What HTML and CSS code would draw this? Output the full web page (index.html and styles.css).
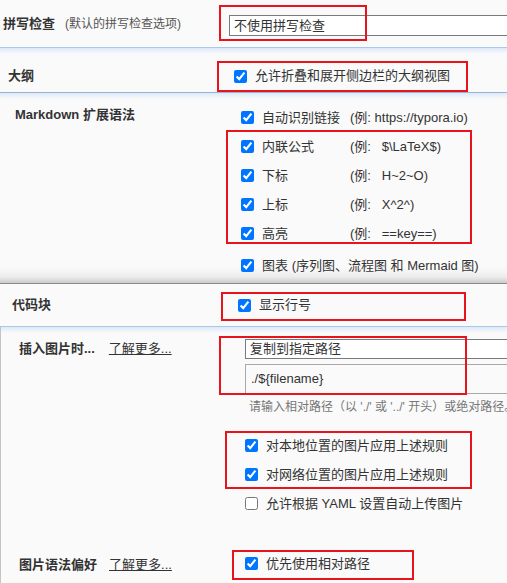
FILE: index.html
```html
<!DOCTYPE html>
<html lang="zh-CN">
<head>
<meta charset="utf-8">
<link rel="stylesheet" href="styles.css">
</head>
<body>
<div class="page">
  <section class="s1">
    <div class="left l1"><span class="h">拼写检查</span><span class="sub">(默认的拼写检查选项)</span></div>
    <div class="selectbox sb1">不使用拼写检查</div>
  </section>
  <div class="ln ln-blue"></div>
  <section class="s2 fade-blue">
    <div class="left l2"><span class="h">大纲</span></div>
    <label class="cb"><input type="checkbox" checked><span>允许折叠和展开侧边栏的大纲视图</span></label>
  </section>
  <div class="ln ln-steel"></div>
  <section class="s3 fade-blue-shadow">
    <div class="left l3"><span class="h">Markdown 扩展语法</span></div>
    <div class="opts">
      <label class="cb row"><input type="checkbox" checked><span class="k">自动识别链接</span><span class="ex">(例: https://typora.io)</span></label>
      <label class="cb row"><input type="checkbox" checked><span class="k">内联公式</span><span class="ex">(例:&nbsp;&nbsp; $\LaTeX$)</span></label>
      <label class="cb row"><input type="checkbox" checked><span class="k">下标</span><span class="ex">(例:&nbsp;&nbsp; H~2~O)</span></label>
      <label class="cb row"><input type="checkbox" checked><span class="k">上标</span><span class="ex">(例:&nbsp;&nbsp; X^2^)</span></label>
      <label class="cb row"><input type="checkbox" checked><span class="k">高亮</span><span class="ex">(例:&nbsp;&nbsp; ==key==)</span></label>
      <label class="cb row last"><input type="checkbox" checked><span>图表 <span class="small">(序列图、流程图 和 Mermaid 图)</span></span></label>
    </div>
  </section>
  <div class="ln ln-dark"></div>
  <section class="s4">
    <div class="left l4"><span class="h">代码块</span></div>
    <label class="cb"><input type="checkbox" checked><span>显示行号</span></label>
  </section>
  <div class="ln ln-blue"></div>
  <section class="s5 fade-blue">
    <div class="grid5">
      <div class="left l5"><span class="h">插入图片时...</span><a class="more">了解更多...</a></div>
      <div class="col5">
        <div class="selectbox sb2">复制到指定路径</div>
        <div class="inputbox">./${filename}</div>
        <div class="hint">请输入相对路径（以 './' 或 '../' 开头）或绝对路径。</div>
        <div class="opts5">
          <label class="cb row"><input type="checkbox" checked><span>对本地位置的图片应用上述规则</span></label>
          <label class="cb row"><input type="checkbox" checked><span>对网络位置的图片应用上述规则</span></label>
          <label class="cb row"><input type="checkbox"><span>允许根据 YAML 设置自动上传图片</span></label>
        </div>
      </div>
      <div class="left l5 pref"><span class="h">图片语法偏好</span><a class="more">了解更多...</a></div>
      <div class="col5 pref">
        <label class="cb row"><input type="checkbox" checked><span>优先使用相对路径</span></label>
      </div>
    </div>
  </section>

  <div class="mark m1"></div>
  <div class="mark m2"></div>
  <div class="mark m3"></div>
  <div class="mark m4"></div>
  <div class="mark m5"></div>
  <div class="mark m6"></div>
  <div class="mark m7"></div>
</div>
</body>
</html>
```

FILE: styles.css
```css
html, body {
  margin: 0;
  padding: 0;
  background: #fafafa;
  overflow: hidden;
}
body {
  width: 507px;
  height: 583px;
  font-family: "Liberation Sans", "Noto Sans CJK SC", sans-serif;
  font-size: 13px;
  color: #333;
}
.page {
  position: relative;
  width: 507px;
  height: 583px;
  overflow: hidden;
}
section {
  box-sizing: border-box;
}
.h {
  font-weight: bold;
  color: #333;
  font-size: 13px;
  line-height: 16px;
}
.sub {
  font-size: 12px;
  color: #555;
  margin-left: 10px;
}
.left {
  box-sizing: border-box;
  flex: none;
  line-height: 16px;
}

/* section 1 */
.s1 {
  height: 47px;
  display: flex;
  align-items: center;
  padding-top: 1px;
}
.l1 { width: 229px; padding-left: 3px; }
.selectbox {
  box-sizing: border-box;
  background: #fff;
  border: 1px solid #7a7a7a;
  font-size: 13px;
  line-height: 18px;
  padding-left: 4px;
  width: 320px;
  flex: none;
  white-space: nowrap;
}
.sb1 { height: 21px; line-height: 19px; margin-top: 2px; }

/* lines */
.ln { height: 1px; }
.ln-blue { background: #a8c8ee; }
.ln-steel { background: #9db3d3; }
.ln-dark { background: #8c8c8c; }
.fade-blue {
  background: linear-gradient(to bottom, #dde9f8 0, #fafafa 6px);
}
.fade-blue-shadow {
  background: linear-gradient(to bottom, #dde9f8 0, #fafafa 6px, #fafafa calc(100% - 16px), #ececec calc(100% - 6px), #cbcbcb 100%);
}

/* checkboxes */
.cb {
  display: flex;
  align-items: center;
  font-size: 13px;
  line-height: 16px;
  color: #333;
  white-space: nowrap;
}
.cb input {
  width: 13px;
  height: 13px;
  margin: 0 8px 0 0;
  flex: none;
  accent-color: #0075ff;
}

/* section 2 */
.s2 {
  height: 44px;
  padding-top: 12px;
  display: flex;
  align-items: center;
}
.l2 { width: 234px; padding-left: 8px; }

/* section 3 */
.s3 {
  height: 190px;
  display: flex;
  align-items: flex-start;
  padding-top: 10px;
}
.l3 { width: 241px; padding-left: 15px; padding-top: 4px; }
.opts {
  display: flex;
  flex-direction: column;
}
.opts .row { height: 29px; }
.opts .row.last { margin-top: 3px; }
.k {
  display: inline-block;
  width: 88px;
}
.ex { color: #333; }
.small { font-size: 13px; }

/* section 4 */
.s4 {
  height: 42px;
  display: flex;
  align-items: center;
}
.l4 { width: 238px; padding-left: 12px; }

/* section 5 */
.s5 {
  border-left: 1px solid #c4c4c4;
  height: 256px;
}
.grid5 {
  display: grid;
  grid-template-columns: 244px 1fr;
  align-items: start;
}
.l5 {
  padding-left: 18px;
  display: flex;
  gap: 14px;
  padding-top: 14px;
}
.more {
  color: #333;
  text-decoration: underline;
  font-size: 13px;
}
.col5 {
  display: flex;
  flex-direction: column;
  align-items: flex-start;
  padding-top: 12px;
}
.sb2 { height: 20px; line-height: 18px; }
.inputbox {
  box-sizing: border-box;
  margin-top: 5px;
  width: 320px;
  height: 30px;
  border: 1px solid #a9a9a9;
  background: #fafafa;
  padding-left: 5px;
  line-height: 28px;
  font-size: 13px;
  white-space: nowrap;
}
.hint {
  margin-top: 5px;
  font-size: 12px;
  line-height: 16px;
  color: #777;
  padding-left: 4px;
  white-space: nowrap;
}
.opts5 {
  margin-top: 16px;
  display: flex;
  flex-direction: column;
}
.opts5 .row { height: 29px; }
.pref.l5 { padding-top: 39px; gap: 12px; }
.col5.pref { padding-top: 31px; }
.col5.pref .row { height: 29px; }

/* red annotation boxes */
.mark {
  position: absolute;
  box-sizing: border-box;
  border: 2px solid #e8141c;
  pointer-events: none;
}
.m1 { left: 219px; top: 5px; width: 148px; height: 36px; }
.m2 { left: 217px; top: 61px; width: 251px; height: 31px; }
.m3 { left: 226px; top: 130px; width: 246px; height: 114px; }
.m4 { left: 221px; top: 292px; width: 245px; height: 29px; }
.m5 { left: 219px; top: 336px; width: 248px; height: 59px; }
.m6 { left: 225px; top: 431px; width: 247px; height: 58px; }
.m7 { left: 232px; top: 550px; width: 182px; height: 30px; }
```
